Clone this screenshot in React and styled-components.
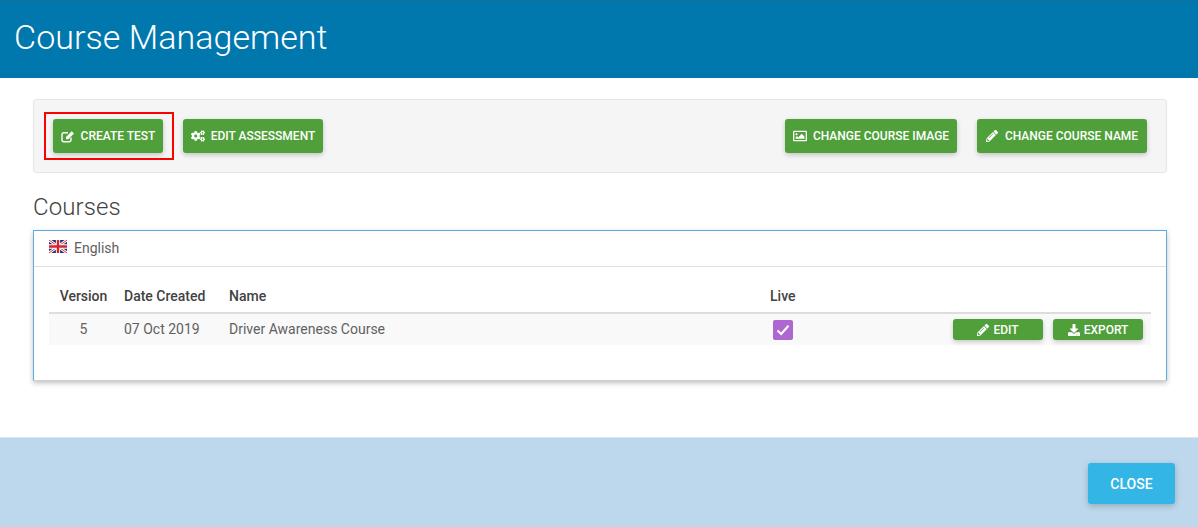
import React from 'react';
import styled, { createGlobalStyle } from 'styled-components';
import { FaCogs, FaRegImage, FaPencilAlt, FaDownload } from 'react-icons/fa';

const GlobalStyle = createGlobalStyle`
  html, body { margin: 0; padding: 0; background: #fff; }
  body { font-family: Roboto, "Liberation Sans", sans-serif; color: #424242; }
  * { box-sizing: border-box; }
`;

const Page = styled.div`
  width: 1198px;
  height: 527px;
  display: flex;
  flex-direction: column;
  overflow: hidden;
`;

const Header = styled.header`
  height: 78px;
  background: #0078ae;
  border-top: 1px solid #146f9b;
  padding: 14px 14px 0;
`;

const Title = styled.h1`
  margin: 0;
  font-size: 34px;
  line-height: 45px;
  font-weight: 300;
  letter-spacing: 0.05px;
  color: #fff;
`;

const Body = styled.main`
  flex: 1;
  padding: 21px 31px 0 33px;
`;

const Toolbar = styled.div`
  height: 74px;
  display: flex;
  align-items: center;
  padding: 0 19px;
  background: #f5f5f5;
  border: 1px solid #e6e6e6;
  border-radius: 3px;
`;

const ToolGroup = styled.div`
  display: flex;
  gap: 20px;
  margin-left: ${p => (p.$end ? 'auto' : '0')};
`;

const Highlight = styled.div`
  display: flex;
  border: 2px solid #f00;
  padding: 5px 9px 5px 7px;
  margin: -7px -11px -7px -9px;
`;

const Button = styled.button`
  display: inline-flex;
  align-items: center;
  justify-content: center;
  gap: ${p => (p.$small ? '4px' : p.$slim ? '7px' : '6px')};
  height: ${p => (p.$small ? '21px' : '34px')};
  width: ${p => p.$width}px;
  padding: 0;
  border: 0;
  border-radius: 3px;
  background: #4fa03a;
  color: #fff;
  font-family: inherit;
  font-size: 12px;
  font-weight: 500;
  text-transform: uppercase;
  box-shadow: 0 2px 5px rgba(0, 0, 0, 0.2);
  svg { font-size: ${p => (p.$small || p.$slim ? '12px' : '14px')}; flex: none; }
`;

const Heading = styled.h2`
  margin: 20px 0 8px;
  font-size: 24px;
  line-height: 29px;
  font-weight: 300;
  letter-spacing: 0.1px;
  color: #424242;
`;

const Card = styled.section`
  height: 151px;
  background: #fff;
  border: 1px solid #5dade2;
  border-bottom-color: #cfcfcf;
  box-shadow: 0 2px 5px rgba(0, 0, 0, 0.25);
`;

const CardHead = styled.div`
  height: 36px;
  display: flex;
  align-items: center;
  gap: 7px;
  padding: 0 15px 2px;
  border-bottom: 1px solid #e0e0e0;
  font-size: 14px;
  color: #616161;
`;

const Flag = styled.svg`
  width: 18px;
  height: 13px;
  margin-top: -2px;
`;

const Table = styled.div`
  margin: 18px 15px 0;
  font-size: 14px;
`;

const Row = styled.div`
  display: grid;
  grid-template-columns: 69px 105px 547px 1fr;
  align-items: center;
  height: ${p => (p.$head ? '29px' : '31px')};
  padding-bottom: ${p => (p.$head ? '6px' : '0')};
  background: ${p => (p.$head ? 'transparent' : '#f9f9f9')};
  border-bottom: ${p => (p.$head ? '2px solid #ddd' : '0')};
`;

const Cell = styled.div`
  padding-left: ${p => (p.$center ? '0' : '6px')};
  margin-bottom: ${p => (p.$head ? '0' : '2px')};
  text-align: ${p => (p.$center ? 'center' : 'left')};
  font-weight: ${p => (p.$head ? 500 : 400)};
  color: ${p => (p.$head ? '#424242' : '#616161')};
`;

const LiveCell = styled.div`
  display: flex;
  align-items: center;
  justify-content: space-between;
  padding: 0 8px 0 ${p => (p.$head ? '0' : '3px')};
  font-weight: ${p => (p.$head ? 500 : 400)};
`;

const Check = styled.span`
  width: 20px;
  height: 20px;
  display: flex;
  align-items: center;
  justify-content: center;
  background: #ae66d0;
  border-radius: 2px;
`;

const RowActions = styled.div`
  display: flex;
  gap: 10px;
`;

const Footer = styled.footer`
  height: 90px;
  display: flex;
  align-items: center;
  justify-content: flex-end;
  padding: 2px 23px 0 0;
  background: #bdd8ec;
  border-top: 1px solid #d9e4ec;
`;

const CloseButton = styled.button`
  width: 87px;
  height: 41px;
  border: 0;
  border-radius: 3px;
  background: #33b5e5;
  color: #fff;
  font-family: inherit;
  font-size: 14px;
  font-weight: 500;
  box-shadow: 0 2px 6px rgba(0, 0, 0, 0.22);
`;

// square outline with a solid pencil, lucide and fa only ship the outlined pencil
const EditIcon = () => (
  <svg width="14" height="13" viewBox="0 0 14 13" fill="none">
    <path d="M10 7.5V10a1.7 1.7 0 0 1-1.7 1.7H2.7A1.7 1.7 0 0 1 1 10V4.4a1.7 1.7 0 0 1 1.7-1.7H7" stroke="#fff" strokeWidth="1.4" />
    <path d="M5 6.9L10.7 1.2 13 3.5 7.3 9.2H5z" fill="#fff" />
  </svg>
);

const CheckMark = () => (
  <svg width="14" height="12" viewBox="0 0 14 12" fill="none">
    <path d="M1.5 6.5L5.2 10 12.5 1.8" stroke="#fff" strokeWidth="2.2" />
  </svg>
);

const UkFlag = () => (
  <Flag viewBox="0 0 60 42" preserveAspectRatio="none">
    <rect width="60" height="42" fill="#22337f" />
    <path d="M0 0L60 42M60 0L0 42" stroke="#fff" strokeWidth="9" />
    <path d="M0 0L60 42M60 0L0 42" stroke="#d8232a" strokeWidth="3" />
    <path d="M30 0V42M0 21H60" stroke="#fff" strokeWidth="14" />
    <path d="M30 0V42M0 21H60" stroke="#d8232a" strokeWidth="8" />
  </Flag>
);

export default function App() {
  return (
    <Page>
      <GlobalStyle />
      <Header>
        <Title>Course Management</Title>
      </Header>
      <Body>
        <Toolbar>
          <ToolGroup>
            <Highlight>
              <Button $width={110}><EditIcon />Create Test</Button>
            </Highlight>
            <Button $width={140}><FaCogs />Edit Assessment</Button>
          </ToolGroup>
          <ToolGroup $end>
            <Button $width={172}><FaRegImage />Change Course Image</Button>
            <Button $width={170} $slim><FaPencilAlt />Change Course Name</Button>
          </ToolGroup>
        </Toolbar>
        <Heading>Courses</Heading>
        <Card>
          <CardHead><UkFlag />English</CardHead>
          <Table>
            <Row $head>
              <Cell $head $center>Version</Cell>
              <Cell $head>Date Created</Cell>
              <Cell $head>Name</Cell>
              <LiveCell $head>Live</LiveCell>
            </Row>
            <Row>
              <Cell $center>5</Cell>
              <Cell>07 Oct 2019</Cell>
              <Cell>Driver Awareness Course</Cell>
              <LiveCell>
                <Check><CheckMark /></Check>
                <RowActions>
                  <Button $small $width={90}><FaPencilAlt />Edit</Button>
                  <Button $small $width={90}><FaDownload />Export</Button>
                </RowActions>
              </LiveCell>
            </Row>
          </Table>
        </Card>
      </Body>
      <Footer>
        <CloseButton>CLOSE</CloseButton>
      </Footer>
    </Page>
  );
}
